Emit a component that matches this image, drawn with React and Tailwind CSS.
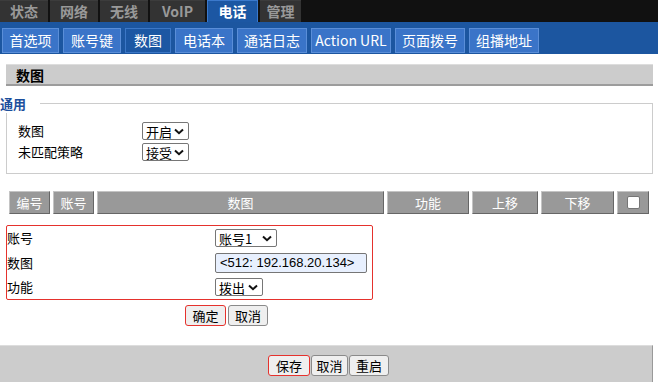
const topTabs = [
  { label: '状态', w: 'w-[48px]' },
  { label: '网络', w: 'w-[48px]' },
  { label: '无线', w: 'w-[48px]' },
  { label: 'VoIP', w: 'w-[55px]' },
  { label: '电话', w: 'w-[51px]', active: true },
  { label: '管理', w: 'w-[41px]' },
]

const subTabs = [
  { label: '首选项', w: 'w-[57px]' },
  { label: '账号键', w: 'w-[58px]' },
  { label: '数图', w: 'w-[46px]', active: true },
  { label: '电话本', w: 'w-[58px]' },
  { label: '通话日志', w: 'w-[70px]' },
  { label: 'Action URL', w: 'w-[80px]' },
  { label: '页面拨号', w: 'w-[70px]' },
  { label: '组播地址', w: 'w-[70px]' },
]

const cols = [
  { label: '编号', w: 'w-[41px]' },
  { label: '账号', w: 'w-[41px]' },
  { label: '数图', w: 'w-[287px]' },
  { label: '功能', w: 'w-[82px]' },
  { label: '上移', w: 'w-[66px]' },
  { label: '下移', w: 'w-[73px]' },
]

function Chevron() {
  return (
    <svg width="10" height="7" viewBox="0 0 10 7" className="shrink-0">
      <path d="M1 1.5 L5 5.2 L9 1.5" fill="none" stroke="#111" strokeWidth="2" />
    </svg>
  )
}

function Select({ text, w }) {
  return (
    <div className={`${w} h-[18px] flex items-center justify-between pl-[3px] pr-[4px] bg-white border border-[#767676] rounded-[2px] text-[13px] leading-none text-black`}>
      <span>{text}</span>
      <Chevron />
    </div>
  )
}

function Btn({ children, w, red }) {
  return (
    <button
      className={`${w} h-[21px] flex items-center justify-center bg-[#efefef] border rounded-[3px] text-[13px] leading-none text-black ${
        red ? 'border-[#e5322d]' : 'border-[#8a8a8a]'
      }`}
    >
      {children}
    </button>
  )
}

export default function App() {
  return (
    <div className="w-[658px] h-[382px] bg-white overflow-hidden font-['Noto_Sans_CJK_SC','Noto_Sans',sans-serif]">
      {/* Top menu */}
      <div className="flex gap-[2px] h-[22px] bg-[#111]">
        {topTabs.map((t) => (
          <div
            key={t.label}
            className={`${t.w} h-[22px] text-center text-[14px] leading-[21px] font-bold ${
              t.active
                ? 'bg-[#1c57a3] border-t border-x border-[#3b79cc] text-white'
                : 'bg-[#333] border-t border-[#3c3c3c] text-[#999]'
            }`}
          >
            {t.label}
          </div>
        ))}
      </div>

      {/* Sub menu */}
      <div className="flex gap-[4px] h-[32px] pt-[6px] pl-[2px] bg-[#1c56a0]">
        {subTabs.map((t) => (
          <div
            key={t.label}
            className={`${t.w} h-[25px] text-center text-[14px] leading-[23px] text-white border ${
              t.active ? 'bg-[#1c57a3] border-[#3c77c6]' : 'bg-[#3a74c8] border-[#5a8ed8]'
            }`}
          >
            {t.label}
          </div>
        ))}
      </div>

      {/* Section header */}
      <div className="ml-[6px] mt-[10px] w-[647px] h-[22px] bg-[#ccc] border-t border-[#ddd] border-b-2 border-b-[#9c9c9c] pl-[10px] text-[14px] leading-[20px] font-bold text-black">
        数图
      </div>

      {/* Fieldset */}
      <div className="relative ml-[6px] mt-[17px] w-[647px] h-[71px] border border-[#ccc] pt-[18px] pl-[11px]">
        <div className="absolute -left-[7px] -top-[8px] w-[40px] h-[17px] bg-white text-[13px] leading-[16px] font-bold text-[#1c4f9c]">
          通用
        </div>
        <div className="flex flex-col gap-[3px]">
          <div className="flex items-center h-[18px]">
            <span className="w-[124px] text-[13px] text-black">数图</span>
            <Select text="开启" w="w-[47px]" />
          </div>
          <div className="flex items-center h-[18px]">
            <span className="w-[124px] text-[13px] text-black">未匹配策略</span>
            <Select text="接受" w="w-[47px]" />
          </div>
        </div>
      </div>

      {/* Table header */}
      <div className="flex gap-[3px] ml-[9px] mt-[17px] h-[23px]">
        {cols.map((c) => (
          <div
            key={c.label + c.w}
            className={`${c.w} h-[23px] bg-[#999] border-t border-l border-[#c4c4c4] border-b border-r border-b-[#666] border-r-[#666] text-center text-[13px] leading-[21px] text-white`}
          >
            {c.label}
          </div>
        ))}
        <div className="w-[32px] h-[23px] bg-[#999] border-t border-l border-[#c4c4c4] border-b border-r border-b-[#666] border-r-[#666] flex items-center justify-center">
          <div className="w-[13px] h-[13px] bg-white border border-[#767676] rounded-[2px]" />
        </div>
      </div>

      {/* Edit box */}
      <div className="ml-[6px] mt-[11px] w-[367px] h-[75px] border border-[#e5322d] rounded-[2px] flex flex-col">
        <div className="flex items-center h-[24px]">
          <span className="w-[208px] text-[13px] text-black">账号</span>
          <Select text="账号1" w="w-[62px]" />
        </div>
        <div className="flex items-center h-[25px]">
          <span className="w-[208px] text-[13px] text-black">数图</span>
          <div className="w-[152px] h-[20px] flex items-center pl-[4px] bg-[#e8f0fe] border border-[#767676] rounded-[2px] text-[13px] leading-none text-black font-['Liberation_Sans',sans-serif]">
            {'<512: 192.168.20.134>'}
          </div>
        </div>
        <div className="flex items-center h-[24px]">
          <span className="w-[208px] text-[13px] text-black">功能</span>
          <Select text="拨出" w="w-[48px]" />
        </div>
      </div>

      {/* Confirm / cancel */}
      <div className="flex gap-[2px] ml-[185px] mt-[5px]">
        <Btn w="w-[41px]" red>确定</Btn>
        <Btn w="w-[40px]">取消</Btn>
      </div>

      {/* Bottom bar */}
      <div className="mt-[19px] w-[653px] h-[39px] bg-[#ccc] border-t border-[#ddd] border-r border-r-[#999] pt-[9px] pl-[268px] flex gap-[1px]">
        <Btn w="w-[42px]" red>保存</Btn>
        <Btn w="w-[37px]">取消</Btn>
        <Btn w="w-[40px]">重启</Btn>
      </div>
    </div>
  )
}
